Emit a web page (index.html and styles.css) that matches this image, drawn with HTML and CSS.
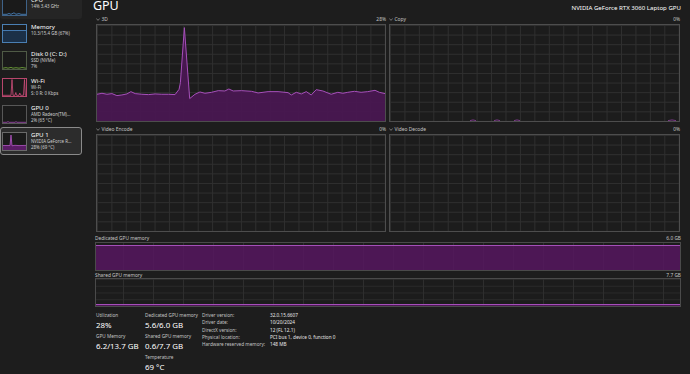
FILE: index.html
```html
<!DOCTYPE html>
<html lang="en">
<head>
<meta charset="utf-8">
<title>Task Manager - GPU</title>
<link rel="stylesheet" href="styles.css">
</head>
<body class="app">
  <aside class="sidebar">
    <div class="item item-hover">
      <svg class="thumb thumb-cpu" viewBox="0 0 23 17" preserveAspectRatio="none">
        <polyline points="0,16.3 4,16.3 6,15.5 8,16.3 11,14.8 13,16.3 16,15.6 18,16.3 23,16.3" fill="none" stroke="#4f8fd0" stroke-width="0.8"/>
      </svg>
      <div class="txt"><div class="ttl">CPU</div><div class="sub">14% 3.43 GHz</div></div>
    </div>
    <div class="item">
      <svg class="thumb thumb-mem" viewBox="0 0 23 17" preserveAspectRatio="none">
        <rect x="0" y="5.5" width="23" height="11.5" fill="#1b3048"/>
        <line x1="0" y1="5.5" x2="23" y2="5.5" stroke="#4f8fd0" stroke-width="0.8"/>
      </svg>
      <div class="txt"><div class="ttl">Memory</div><div class="sub">10.3/15.4 GB (67%)</div></div>
    </div>
    <div class="item">
      <svg class="thumb thumb-disk" viewBox="0 0 23 17" preserveAspectRatio="none">
        <polyline points="0,16.2 3,15.6 5,16.2 8,15.4 10,16.2 13,15.7 16,16.2 19,15.5 23,16.2" fill="none" stroke="#79b43e" stroke-width="0.8"/>
      </svg>
      <div class="txt"><div class="ttl">Disk 0 (C: D:)</div><div class="sub">SSD (NVMe)</div><div class="sub">7%</div></div>
    </div>
    <div class="item">
      <svg class="thumb thumb-wifi" viewBox="0 0 23 17" preserveAspectRatio="none">
        <polyline points="0,16.3 8,16.3 9,0.5 10,16.3 12,16.3 12.8,13.5 13.6,16.3 16,16.3 16.8,14 17.6,16.3 20.5,16.3 21.5,0.5 22.3,16.3 23,16.3" fill="none" stroke="#d14f7c" stroke-width="0.8"/>
      </svg>
      <div class="txt"><div class="ttl">Wi-Fi</div><div class="sub">Wi-Fi</div><div class="sub">S: 0 R: 0 Kbps</div></div>
    </div>
    <div class="item">
      <svg class="thumb thumb-gpu0" viewBox="0 0 23 17" preserveAspectRatio="none">
        <polyline points="0,16.3 4,16.3 5,15.5 6,16.3 12,16.3 13,15.6 14,16.3 23,16.3" fill="none" stroke="#a64bb8" stroke-width="0.8"/>
      </svg>
      <div class="txt"><div class="ttl">GPU 0</div><div class="sub">AMD Radeon(TM)...</div><div class="sub">2% (65 °C)</div></div>
    </div>
    <div class="item item-active">
      <svg class="thumb thumb-gpu1" viewBox="0 0 23 17" preserveAspectRatio="none">
        <polygon points="0,12.5 7,12.5 8,2 9,12.8 12,12.3 16,12.6 23,12.4 23,17 0,17" fill="#5a1d66"/>
        <polyline points="0,12.5 7,12.5 8,2 9,12.8 12,12.3 16,12.6 23,12.4" fill="none" stroke="#b257c4" stroke-width="0.8"/>
      </svg>
      <div class="txt"><div class="ttl">GPU 1</div><div class="sub">NVIDIA GeForce R...</div><div class="sub">28% (69 °C)</div></div>
    </div>
  </aside>

  <main class="main">
    <header class="head">
      <h1 class="title">GPU</h1>
      <span class="model">NVIDIA GeForce RTX 3060 Laptop GPU</span>
    </header>

    <section class="charts">
      <div class="chart">
        <div class="clabel"><span class="cname"><svg class="chev" viewBox="0 0 6 4"><polyline points="0.5,0.8 3,3.2 5.5,0.8" fill="none" stroke="#bdbdbd" stroke-width="0.9"/></svg>3D</span><span>28%</span></div>
        <div class="cbox grid20">
          <svg class="plot" viewBox="35 75 867 291" preserveAspectRatio="none">
            <polygon fill="#4a1752" fill-opacity="0.92" points="35,285 50,282 65,285 80,283 95,289 110,287 125,284 137,277 150,283 170,285 190,286 210,284 230,285 250,285 270,286 282,270 286,250 298,83 314,298 330,285 345,278 360,282 380,279 400,274 420,275 432,269 445,275 470,274 500,276 520,281 550,277 580,277 610,280 620,287 635,279 650,284 665,277 680,287 695,271 715,275 740,285 760,279 775,282 790,279 810,276 830,279 850,277 872,273 885,279 902,283 902,366 35,366"/>
            <polyline fill="none" stroke="#a64fba" stroke-width="1" vector-effect="non-scaling-stroke" points="35,285 50,282 65,285 80,283 95,289 110,287 125,284 137,277 150,283 170,285 190,286 210,284 230,285 250,285 270,286 282,270 286,250 298,83 314,298 330,285 345,278 360,282 380,279 400,274 420,275 432,269 445,275 470,274 500,276 520,281 550,277 580,277 610,280 620,287 635,279 650,284 665,277 680,287 695,271 715,275 740,285 760,279 775,282 790,279 810,276 830,279 850,277 872,273 885,279 902,283"/>
          </svg>
        </div>
      </div>
      <div class="chart">
        <div class="clabel"><span class="cname"><svg class="chev" viewBox="0 0 6 4"><polyline points="0.5,0.8 3,3.2 5.5,0.8" fill="none" stroke="#bdbdbd" stroke-width="0.9"/></svg>Copy</span><span>0%</span></div>
        <div class="cbox grid20">
          <svg class="plot" viewBox="0 0 289 97" preserveAspectRatio="none">
            <g fill="none" stroke="#7a3a88" stroke-width="1">
              <polyline points="80,96.6 83,95.9 86,96.6"/>
              <polyline points="104,96.6 107,95.9 110,96.6"/>
              <polyline points="124,96.6 127,95.9 130,96.6"/>
              <polyline points="278,96.6 282,95.9 286,96.6"/>
            </g>
          </svg>
        </div>
      </div>
      <div class="chart">
        <div class="clabel"><span class="cname"><svg class="chev" viewBox="0 0 6 4"><polyline points="0.5,0.8 3,3.2 5.5,0.8" fill="none" stroke="#bdbdbd" stroke-width="0.9"/></svg>Video Encode</span><span>0%</span></div>
        <div class="cbox grid20"></div>
      </div>
      <div class="chart">
        <div class="clabel"><span class="cname"><svg class="chev" viewBox="0 0 6 4"><polyline points="0.5,0.8 3,3.2 5.5,0.8" fill="none" stroke="#bdbdbd" stroke-width="0.9"/></svg>Video Decode</span><span>0%</span></div>
        <div class="cbox grid20"></div>
      </div>
    </section>

    <section class="mem">
      <div class="mlabel mlabel-first"><span>Dedicated GPU memory</span><span>6.0 GB</span></div>
      <div class="mbox mgrid">
        <div class="mfill" style="height: 93%"></div>
      </div>
      <div class="mlabel"><span>Shared GPU memory</span><span>7.7 GB</span></div>
      <div class="mbox mgrid mgrid-rows">
        <div class="mfill" style="height: 8%"></div>
      </div>
    </section>

    <section class="stats">
      <div class="scol scol-1">
        <div class="stat"><div class="slabel">Utilization</div><div class="sval">28%</div></div>
        <div class="stat"><div class="slabel">GPU Memory</div><div class="sval">6.2/13.7 GB</div></div>
      </div>
      <div class="scol scol-2">
        <div class="stat"><div class="slabel">Dedicated GPU memory</div><div class="sval">5.6/6.0 GB</div></div>
        <div class="stat"><div class="slabel">Shared GPU memory</div><div class="sval">0.6/7.7 GB</div></div>
        <div class="stat"><div class="slabel">Temperature</div><div class="sval">69 °C</div></div>
      </div>
      <div class="info">
        <span class="ik">Driver version:</span><span class="iv">32.0.15.6607</span>
        <span class="ik">Driver date:</span><span class="iv">10/20/2024</span>
        <span class="ik">DirectX version:</span><span class="iv">12 (FL 12.1)</span>
        <span class="ik">Physical location:</span><span class="iv">PCI bus 1, device 0, function 0</span>
        <span class="ik">Hardware reserved memory:</span><span class="iv">148 MB</span>
      </div>
    </section>
  </main>
</body>
</html>
```

FILE: styles.css
```css
* { box-sizing: border-box; }

html, body {
  margin: 0;
  padding: 0;
}

.app {
  width: 690px;
  height: 374px;
  overflow: hidden;
  background: #1d1d1d;
  color: #ffffff;
  font-family: "Noto Sans", "Open Sans", sans-serif;
  display: flex;
  align-items: flex-start;
}

/* ---------- sidebar ---------- */
.sidebar {
  width: 90px;
  flex: none;
  margin-top: -8px;
  display: flex;
  flex-direction: column;
}

.item {
  width: 82px;
  height: 27px;
  border: 1px solid transparent;
  border-radius: 3px;
  display: flex;
  align-items: flex-start;
  gap: 4px;
  padding: 4px 0 0 1px;
}

.item-hover { background: #252525; }

.item-active {
  background: #2c2c2c;
  border-color: #8a8a8a;
  height: 28px;
}

.thumb {
  width: 25px;
  height: 19px;
  flex: none;
  border: 1px solid #5a5a5a;
  background: #1a1a1a;
  display: block;
}
.thumb-cpu { border-color: #3e6288; }
.thumb-mem { border-color: #4a7fb3; }
.thumb-disk { border-color: #4f5a46; }
.thumb-wifi { border-color: #b8466c; }
.thumb-gpu0 { border-color: #575757; }
.thumb-gpu1 { border-color: #6a6a6a; }

.txt {
  display: flex;
  flex-direction: column;
  margin-top: -1px;
  white-space: nowrap;
}
.ttl {
  font-size: 6.1px;
  line-height: 7px;
  color: #ffffff;
}
.sub {
  font-size: 4.4px;
  line-height: 6.3px;
  color: #cfcfcf;
}

/* ---------- main ---------- */
.main {
  flex: 1;
  padding: 0 9px 0 5px;
  display: flex;
  flex-direction: column;
}

.head {
  height: 14px;
  display: flex;
  justify-content: space-between;
  align-items: flex-start;
}
.title {
  margin: 0 0 0 -2px;
  font-size: 12.5px;
  line-height: 12px;
  font-weight: 400;
  letter-spacing: -0.1px;
}
.model {
  font-size: 6.1px;
  line-height: 14px;
  color: #ffffff;
  margin-top: 1px;
}

.charts {
  display: grid;
  grid-template-columns: 290px 291px;
  column-gap: 3px;
  row-gap: 2px;
  padding-left: 1px;
}

.clabel {
  height: 10px;
  display: flex;
  justify-content: space-between;
  align-items: center;
  font-size: 4.9px;
  color: #c4c4c4;
  white-space: nowrap;
}
.cname {
  display: flex;
  align-items: center;
  gap: 1.5px;
}
.chev {
  width: 4px;
  height: 3px;
  display: block;
}

.cbox {
  height: 98px;
  border: 1px solid #4d4d4d;
  background-color: #1c1c1c;
}
.grid20 {
  background-image:
    linear-gradient(to right, #2f2f2f 1px, transparent 1px),
    linear-gradient(to bottom, #2f2f2f 1px, transparent 1px);
  background-size: 5% 10%;
}
.plot {
  width: 100%;
  height: 100%;
  display: block;
}

.mem {
  margin-top: 2px;
  display: flex;
  flex-direction: column;
}
.mlabel {
  height: 7px;
  display: flex;
  justify-content: space-between;
  align-items: center;
  font-size: 4.8px;
  color: #c4c4c4;
  white-space: nowrap;
}
.mlabel-first { height: 8px; }

.mbox {
  height: 29px;
  border: 1px solid #4a4a4a;
  display: flex;
  flex-direction: column;
  justify-content: flex-end;
  background-color: #1c1c1c;
}
.mgrid {
  background-image: linear-gradient(to right, #2e2e2e 1px, transparent 1px);
  background-size: 30px 100%;
  background-position: 27px 0;
}
.mgrid-rows {
  background-image:
    linear-gradient(to right, #2e2e2e 1px, transparent 1px),
    linear-gradient(to bottom, #2a2a2a 1px, transparent 1px);
  background-size: 30px 100%, 100% 25%;
  background-position: 27px 0, 0 0;
}
.mfill {
  background: rgba(88, 22, 98, 0.82);
  border-top: 1px solid #a54fb9;
}

/* ---------- stats ---------- */
.stats {
  display: flex;
  padding: 4px 0 0 1px;
}
.scol {
  display: flex;
  flex-direction: column;
  gap: 1px;
}
.scol-1 { width: 49px; }
.scol-2 { width: 57px; }

.stat {
  display: flex;
  flex-direction: column;
}
.slabel {
  font-size: 4.7px;
  line-height: 8px;
  color: #c4c4c4;
  white-space: nowrap;
}
.sval {
  font-size: 7.9px;
  line-height: 12px;
  color: #ffffff;
  white-space: nowrap;
}

.info {
  display: grid;
  grid-template-columns: 68px auto;
  grid-auto-rows: 7.3px;
  align-items: center;
  padding-top: 0.5px;
  font-size: 4.7px;
  white-space: nowrap;
}
.ik { color: #c4c4c4; }
.iv { color: #e8e8e8; }
```
